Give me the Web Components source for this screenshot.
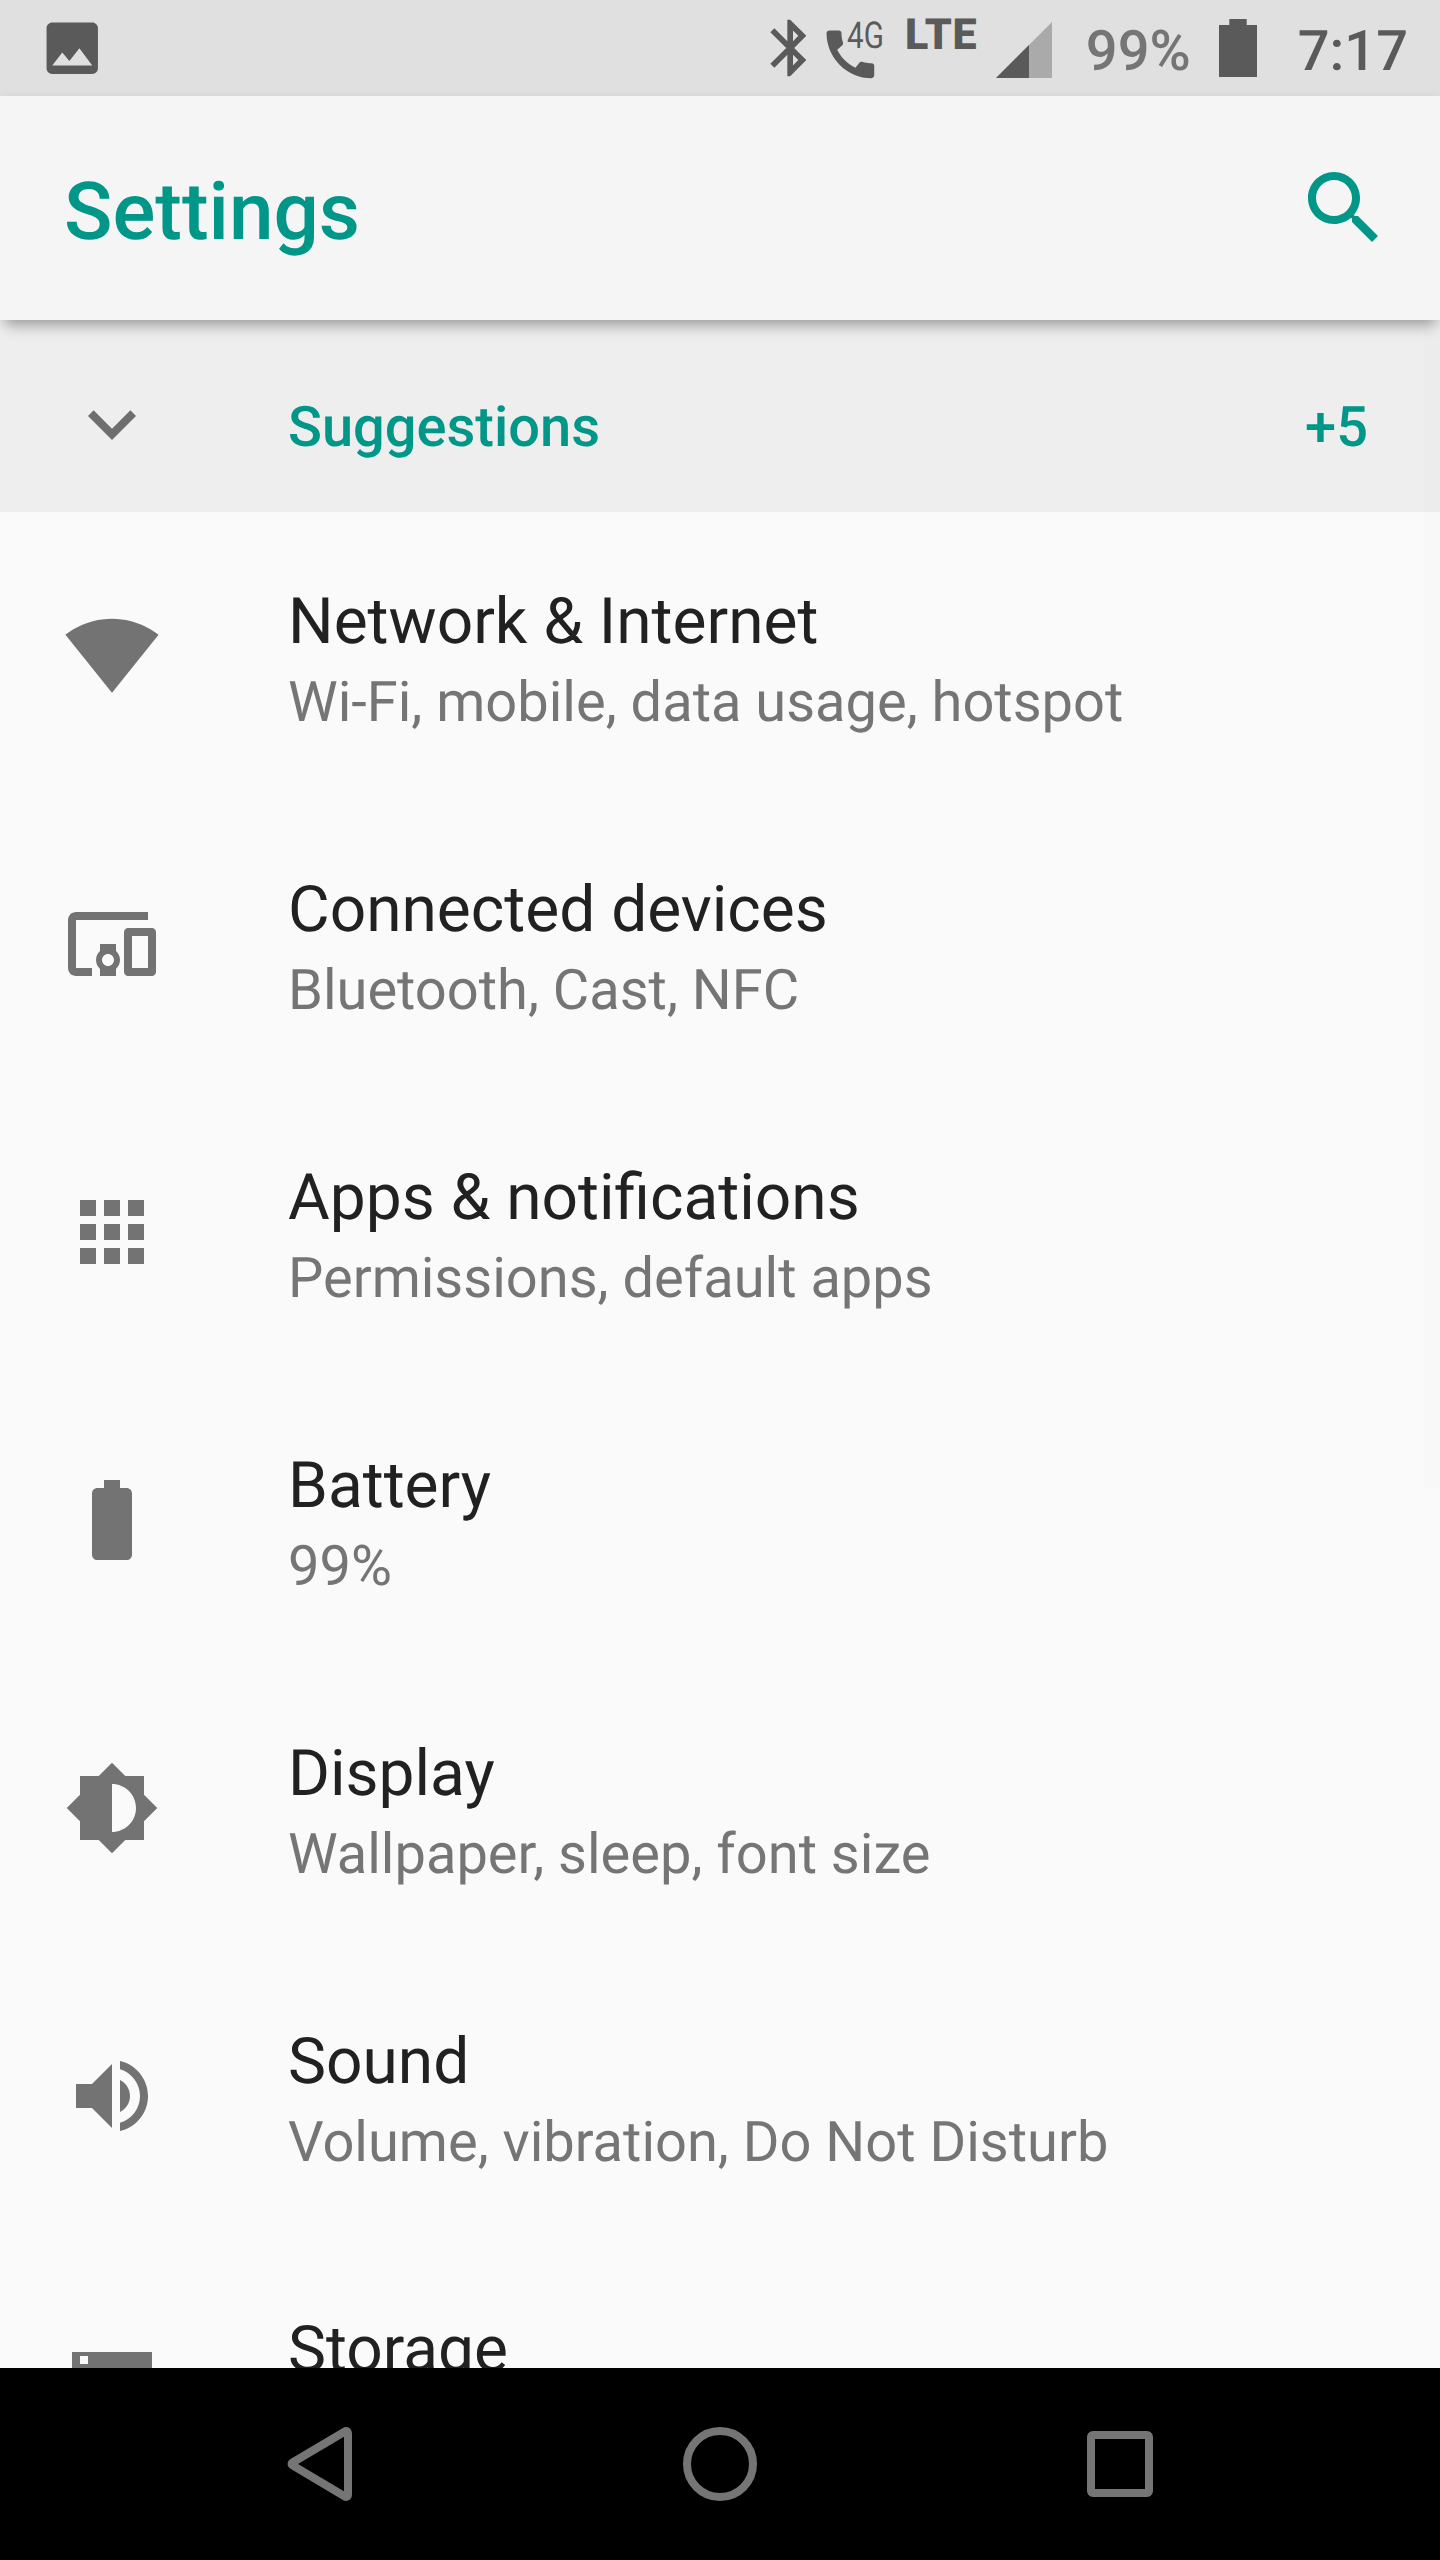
<!DOCTYPE html>
<html lang="en">
<head>
<meta charset="utf-8">
<title>Settings</title>
<style>
  html, body {
    margin: 0;
    height: 100%;
  }

  body {
    font-family: Roboto, sans-serif;
    text-rendering: geometricPrecision;
    background: #fafafa;
  }
</style>
</head>
<body>
<settings-screen>
  <status-bar slot="status" battery="99%" time="7:17"></status-bar>
  <app-bar slot="header">Settings</app-bar>
  <suggestion-bar count="+5">Suggestions</suggestion-bar>
  <settings-item icon="wifi" summary="Wi-Fi, mobile, data usage, hotspot">Network &amp; Internet</settings-item>
  <settings-item icon="devices" summary="Bluetooth, Cast, NFC">Connected devices</settings-item>
  <settings-item icon="apps" summary="Permissions, default apps">Apps &amp; notifications</settings-item>
  <settings-item icon="battery" summary="99%">Battery</settings-item>
  <settings-item icon="display" summary="Wallpaper, sleep, font size">Display</settings-item>
  <settings-item icon="sound" summary="Volume, vibration, Do Not Disturb">Sound</settings-item>
  <settings-item icon="storage">Storage</settings-item>
  <nav-bar slot="nav"></nav-bar>
</settings-screen>

<script>
const ICONS = {
  image: '<path d="M21 19V5c0-1.1-.9-2-2-2H5c-1.1 0-2 .9-2 2v14c0 1.1.9 2 2 2h14c1.1 0 2-.9 2-2zM8.5 13.5l2.5 3.01L14.5 12l4.5 6H5l3.5-4.5z"/>',
  bluetooth: '<path d="M17.71 7.71L12 2h-1v7.59L6.41 5 5 6.41 10.59 12 5 17.59 6.41 19 11 14.41V22h1l5.71-5.71-4.3-4.29 4.3-4.29zM13 5.83l1.88 1.88L13 9.59V5.83zm1.88 10.46L13 18.17v-3.76l1.88 1.88z"/>',
  search: '<path d="M15.5 14h-.79l-.28-.27C15.41 12.59 16 11.11 16 9.5 16 5.91 13.09 3 9.5 3S3 5.91 3 9.5 5.91 16 9.5 16c1.61 0 3.09-.59 4.23-1.57l.27.28v.79l5 4.99L20.49 19l-4.99-5zm-6 0C7.01 14 5 11.99 5 9.5S7.01 5 9.5 5 14 7.01 14 9.5 11.99 14 9.5 14z"/>',
  expand: '<path d="M16.59 8.59L12 13.17 7.41 8.59 6 10l6 6 6-6z"/>',
  wifi: '<path transform="translate(0 -.32)" d="M12.01 21.49L23.64 7c-.45-.34-4.93-4-11.64-4C5.28 3 .81 6.66.36 7l11.63 14.49.01.01.01-.01z"/>',
  devices: '<path d="M3 6h18V4H3c-1.1 0-2 .9-2 2v12c0 1.1.9 2 2 2h4v-2H3V6zm10 6H9v1.78c-.61.55-1 1.33-1 2.22s.39 1.67 1 2.22V20h4v-1.78c.61-.55 1-1.34 1-2.22s-.39-1.67-1-2.22V12zm-2 5.5c-.83 0-1.5-.67-1.5-1.5s.67-1.5 1.5-1.5 1.5.67 1.5 1.5-.67 1.5-1.5 1.5zM22 8h-6c-.5 0-1 .5-1 1v10c0 .5.5 1 1 1h6c.5 0 1-.5 1-1V9c0-.5-.5-1-1-1zm-1 10h-4v-8h4v8z"/>',
  apps: '<path d="M4 8h4V4H4v4zm6 12h4v-4h-4v4zm-6 0h4v-4H4v4zm0-6h4v-4H4v4zm6 0h4v-4h-4v4zm6-10v4h4V4h-4zm-6 4h4V4h-4v4zm6 6h4v-4h-4v4zm0 6h4v-4h-4v4z"/>',
  battery: '<path d="M15.67 4H14V2h-4v2H8.33C7.6 4 7 4.6 7 5.33v15.33C7 21.4 7.6 22 8.33 22h7.33c.74 0 1.34-.6 1.34-1.33V5.33C17 4.6 16.4 4 15.67 4z"/>',
  display: '<path d="M20 15.31L23.31 12 20 8.69V4h-4.69L12 .69 8.69 4H4v4.69L.69 12 4 15.31V20h4.69L12 23.31 15.31 20H20v-4.69zM12 18V6c3.31 0 6 2.69 6 6s-2.69 6-6 6z"/>',
  sound: '<path d="M3 9v6h4l5 5V4L7 9H3zm13.5 3c0-1.77-1.02-3.29-2.5-4.03v8.05c1.48-.73 2.5-2.25 2.5-4.02zM14 3.23v2.06c2.89.86 5 3.54 5 6.71s-2.11 5.85-5 6.71v2.06c4.01-.91 7-4.49 7-8.77s-2.99-7.86-7-8.77z"/>',
  storage: '<path d="M2 20h20v-4H2v4zm2-3h2v2H4v-2zM2 4v4h20V4H2zm4 3H4V5h2v2zm-4 7h20v-4H2v4zm2-3h2v2H4v-2z"/>'
};

class MdIcon extends HTMLElement {
  connectedCallback() {
    const shadow = this.attachShadow({ mode: "open" });
    shadow.innerHTML = `
      <style>
        :host {
          display: block;
          flex: none;
          width: var(--icon-size, 96px);
          height: var(--icon-size, 96px);
        }
        svg {
          display: block;
          width: 100%;
          height: 100%;
          fill: currentColor;
        }
      </style>
      <svg viewBox="0 0 24 24">${ICONS[this.getAttribute("name")]}</svg>
    `;
  }
}

class StatusBar extends HTMLElement {
  connectedCallback() {
    const shadow = this.attachShadow({ mode: "open" });
    shadow.innerHTML = `
      <style>
        :host {
          display: flex;
          align-items: center;
          box-sizing: border-box;
          height: 96px;
          padding: 0 32px 0 38px;
          background: #e0e0e0;
          color: #5a5a5a;
          font-size: 56px;
          font-weight: 500;
          --icon-size: 68.5px;
        }
        svg {
          display: block;
          flex: none;
          fill: currentColor;
        }
        .spacer { flex: 1; }
        .level {
          color: #757575;
          margin-left: 30px;
        }
        .level, .time { padding-top: 5px; }
        .battery { margin: 0 41px 0 28px; }
      </style>
      <md-icon name="image"></md-icon>
      <div class="spacer"></div>
      <svg width="300" height="96" viewBox="756 0 300 96">
        <g transform="translate(756.2 14) scale(2.83)">${ICONS.bluetooth}</g>
        <path transform="translate(818.6 22.6) scale(2.65)" d="M20.01 15.38c-1.23 0-2.42-.2-3.53-.56-.35-.12-.74-.03-1.01.24l-1.57 1.97c-2.83-1.35-5.48-3.9-6.89-6.83l1.95-1.66c.27-.28.35-.67.24-1.02-.37-1.11-.56-2.3-.56-3.53 0-.54-.45-.99-.99-.99H4.19C3.65 3 3 3.24 3 3.99 3 13.28 10.73 21 20.01 21c.71 0 .99-.63.99-1.18v-3.45c0-.54-.45-.99-.99-.99z"/>
        <text transform="translate(847 48.3) scale(.8 1)" font-size="37" font-weight="400">4G</text>
        <text x="905" y="49" font-size="43" font-weight="900" textLength="71.5">LTE</text>
        <path d="M996 78l56-56v56z" opacity=".4"/>
        <path d="M996 78l33-33v33z"/>
      </svg>
      <span class="level">${this.getAttribute("battery")}</span>
      <svg class="battery" width="38" height="58" viewBox="0 0 38 58">
        <path d="M10.3 0h17.4v6H38v52H0V6h10.3z"/>
      </svg>
      <span class="time">${this.getAttribute("time")}</span>
    `;
  }
}

class AppBar extends HTMLElement {
  constructor() {
    super();
    const shadow = this.attachShadow({ mode: "open" });
    shadow.innerHTML = `
      <style>
        :host {
          display: flex;
          position: relative;
          z-index: 1;
          align-items: center;
          justify-content: space-between;
          box-sizing: border-box;
          height: 224px;
          padding: 0 48px 0 64px;
          background: #f5f5f5;
          box-shadow: 0 12px 14px -6px rgba(0, 0, 0, .29), 0 2px 10px rgba(0, 0, 0, .09);
          color: #009688;
        }
        h1 {
          margin: 0;
          padding-top: 8px;
          font-size: 80px;
          font-weight: 500;
        }
      </style>
      <h1><slot></slot></h1>
      <md-icon name="search"></md-icon>
    `;
  }
}

class SuggestionBar extends HTMLElement {
  connectedCallback() {
    const shadow = this.attachShadow({ mode: "open" });
    shadow.innerHTML = `
      <style>
        :host {
          display: flex;
          align-items: center;
          box-sizing: border-box;
          height: 192px;
          padding: 16px 72px 0 64px;
          background: #eee;
          color: #009688;
          font-size: 56px;
          font-weight: 500;
        }
        md-icon {
          margin-right: 128px;
          color: #6e6e6e;
        }
        span { padding-top: 5px; }
        .label { flex: 1; }
      </style>
      <md-icon name="expand"></md-icon>
      <span class="label"><slot></slot></span>
      <span>${this.getAttribute("count")}</span>
    `;
  }
}

class SettingsItem extends HTMLElement {
  connectedCallback() {
    const shadow = this.attachShadow({ mode: "open" });
    shadow.innerHTML = `
      <style>
        :host {
          display: flex;
          flex: none;
          align-items: center;
          height: 288px;
          padding-left: 64px;
          color: #212121;
        }
        md-icon {
          margin-right: 128px;
          color: #737373;
        }
        .text {
          align-self: flex-start;
          padding-top: 67px;
          white-space: nowrap;
        }
        .title {
          font-size: 64px;
          line-height: 85px;
        }
        .summary {
          margin-top: 1px;
          font-size: 56px;
          line-height: 74px;
          color: #757575;
        }
      </style>
      <md-icon name="${this.getAttribute("icon")}"></md-icon>
      <div class="text">
        <div class="title"><slot></slot></div>
        <div class="summary">${this.getAttribute("summary") || ""}</div>
      </div>
    `;
  }
}

class NavBar extends HTMLElement {
  constructor() {
    super();
    const shadow = this.attachShadow({ mode: "open" });
    shadow.innerHTML = `
      <style>
        :host {
          display: flex;
          align-items: center;
          justify-content: center;
          gap: 304px;
          height: 192px;
          background: #000;
        }
        svg {
          width: 96px;
          height: 96px;
          fill: none;
          stroke: #757575;
          stroke-width: 8;
          stroke-linejoin: round;
        }
      </style>
      <svg viewBox="0 0 96 96"><path d="M76 18Q76 13.7 72.5 15.8L21 46.3Q18.2 48 21 49.7L72.5 80.2Q76 82.3 76 78z"/></svg>
      <svg viewBox="0 0 96 96"><circle cx="48" cy="48" r="33"/></svg>
      <svg viewBox="0 0 96 96"><rect x="19" y="19" width="58" height="58" rx="2"/></svg>
    `;
  }
}

class SettingsScreen extends HTMLElement {
  constructor() {
    super();
    const shadow = this.attachShadow({ mode: "open" });
    shadow.innerHTML = `
      <style>
        :host {
          display: flex;
          flex-direction: column;
          width: 1440px;
          height: 2560px;
          overflow: hidden;
        }
        main {
          position: relative;
          flex: 1;
          min-height: 0;
          overflow: hidden;
          background: #fafafa;
        }
        /* scroll thumb, almost faded out */
        .thumb {
          position: absolute;
          top: 0;
          right: 0;
          width: 16px;
          height: 1169px;
          background: rgba(0, 0, 0, .006);
        }
      </style>
      <slot name="status"></slot>
      <slot name="header"></slot>
      <main>
        <slot></slot>
        <div class="thumb"></div>
      </main>
      <slot name="nav"></slot>
    `;
  }
}

customElements.define("md-icon", MdIcon);
customElements.define("status-bar", StatusBar);
customElements.define("app-bar", AppBar);
customElements.define("suggestion-bar", SuggestionBar);
customElements.define("settings-item", SettingsItem);
customElements.define("nav-bar", NavBar);
customElements.define("settings-screen", SettingsScreen);
</script>
</body>
</html>
